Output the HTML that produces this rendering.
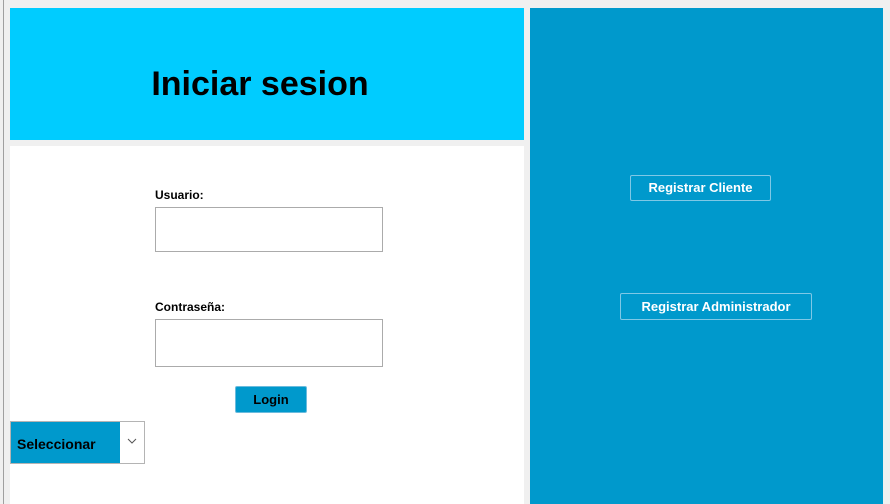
<!DOCTYPE html>
<html><head><meta charset="utf-8"><style>
*{margin:0;padding:0;box-sizing:border-box}
body{width:890px;height:504px;background:#f0f0f0;position:relative;overflow:hidden;font-family:"Liberation Sans",sans-serif}
.a{position:absolute}
.lbl{font-size:12px;font-weight:bold;color:#000}
.inp{background:#fff;border:1px solid #ababab}
.btn{border:1px solid #7fc8e6;color:#fff;font-weight:bold;font-size:13px;text-align:center;border-radius:2px}
</style></head><body>
<div class="a" style="left:3px;top:0;width:1px;height:504px;background:#a0a0a0"></div>
<div class="a" style="left:10px;top:8px;width:514px;height:132px;background:#00ccff"></div>
<div class="a" style="left:3px;top:65px;width:514px;text-align:center;font-size:34px;font-weight:bold;color:#000">Iniciar sesion</div>
<div class="a" style="left:10px;top:146px;width:514px;height:358px;background:#fff"></div>
<div class="a lbl" style="left:155px;top:188px">Usuario:</div>
<div class="a inp" style="left:155px;top:207px;width:228px;height:45px"></div>
<div class="a lbl" style="left:155px;top:300px">Contraseña:</div>
<div class="a inp" style="left:155px;top:319px;width:228px;height:48px"></div>
<div class="a" style="left:235px;top:386px;width:72px;height:27px;background:#0099cc;border:1px solid #6bbbdd;border-radius:2px;font-size:13px;font-weight:bold;text-align:center;line-height:26px">Login</div>
<div class="a" style="left:10px;top:421px;width:135px;height:43px;background:#fff;border:1px solid #b4b4b4"></div>
<div class="a" style="left:11px;top:422px;width:109px;height:41px;background:#0099cc;font-size:14px;font-weight:bold;line-height:44px;padding-left:6px">Seleccionar</div>
<svg class="a" style="left:127px;top:438px" width="10" height="6"><path d="M1 1L5 5L9 1" fill="none" stroke="#555" stroke-width="1"/></svg>
<div class="a" style="left:530px;top:8px;width:353px;height:496px;background:#0099cc"></div>
<div class="a btn" style="left:630px;top:175px;width:141px;height:26px;line-height:24px">Registrar Cliente</div>
<div class="a btn" style="left:620px;top:293px;width:192px;height:27px;line-height:25px">Registrar Administrador</div>
</body></html>
